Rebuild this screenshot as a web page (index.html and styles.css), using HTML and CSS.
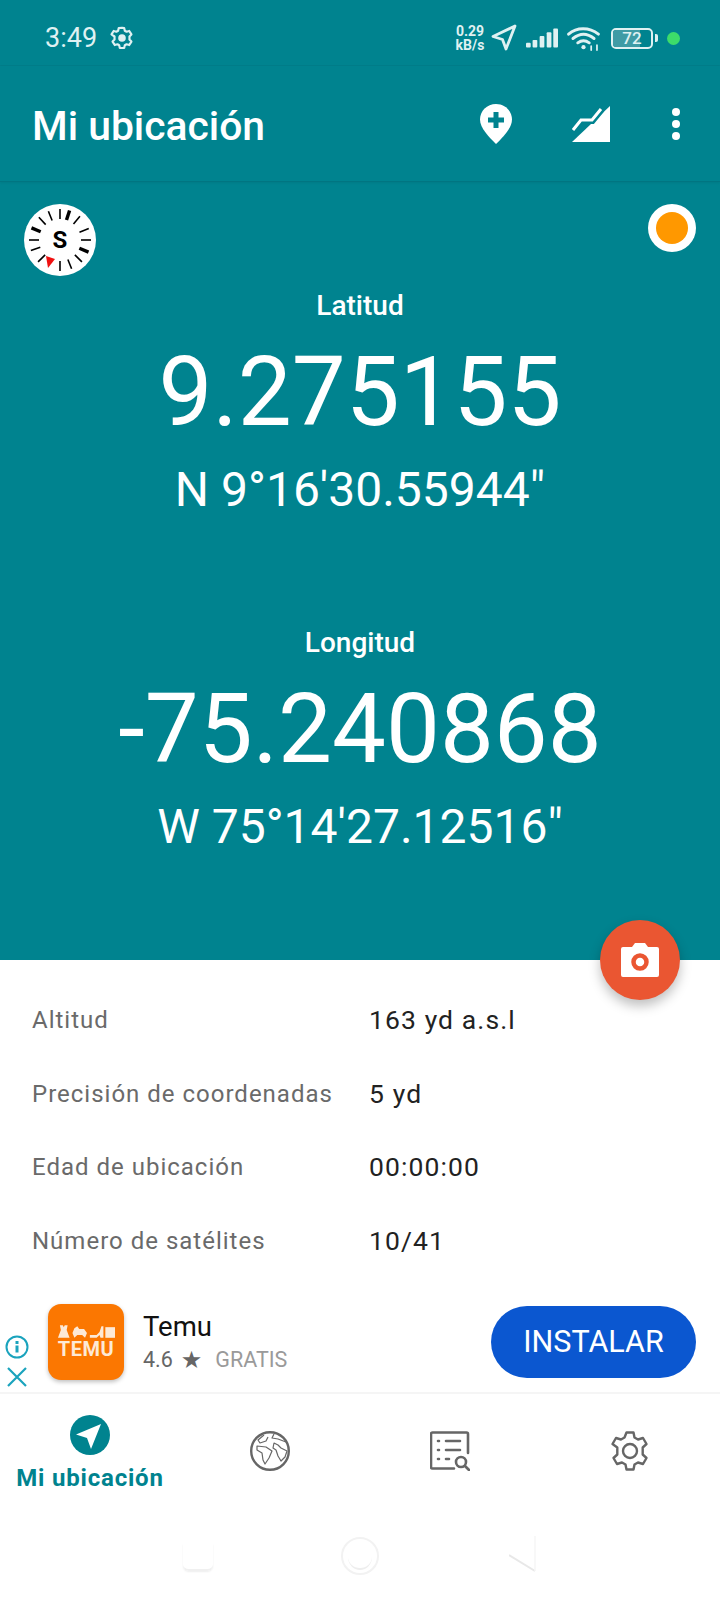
FILE: index.html
```html
<!DOCTYPE html>
<html lang="es">
<head>
    <meta charset="UTF-8">
    <meta name="viewport" content="width=device-width, initial-scale=1.0">
    <title>Mi ubicación</title>
    <link rel="stylesheet" href="styles.css">
</head>
<body>
    <div class="top">
        <div class="status">
            <div class="status-left">
                <span class="time">3:49</span>
                <svg class="status-gear" viewBox="0 0 24 24"><path d="M12 2.500l2 .3.6 2.500 1.600.9 2.500-.7 2 3.200-1.800 1.900v2.800l1.800 1.900-2 3.200-2.500-.7-1.600.9-.6 2.500h-4l-.6-2.500-1.600-.9-2.500.7-2-3.200 1.800-1.900V10.600L2.300 8.700l2-3.200 2.500.7 1.600-.9.6-2.500z" fill="none" stroke="#dff1f2" stroke-width="2" stroke-linejoin="round"/><circle cx="12" cy="12" r="3.500" fill="#dff1f2"/></svg>
            </div>
            <div class="status-right">
                <div class="speed"><span>0.29</span><span>kB/s</span></div>
                <svg class="st-nav" viewBox="0 0 28 28"><path d="M25 2L3 12.500l9.500 3L16 25z" fill="none" stroke="#dff1f2" stroke-width="2.800" stroke-linejoin="round"/></svg>
                <svg class="st-signal" viewBox="0 0 34 22" fill="#dff1f2"><rect x="0" y="16" width="5" height="5" rx="1"/><rect x="7" y="13" width="5" height="8" rx="1"/><rect x="14.500" y="9" width="5" height="12" rx="1"/><rect x="22" y="5" width="5" height="16" rx="1"/><rect x="29" y="1" width="5" height="20" rx="1"/></svg>
                <svg class="st-wifi" viewBox="0 0 34 26" fill="none" stroke="#dff1f2" stroke-width="3" stroke-linecap="round"><path d="M1.500 8.500C10 1 23 1 32.500 8.500"/><path d="M6 13c7-5.500 15-5.500 22 0"/><path d="M11 17.500c4-3 8-3 12 0"/><circle cx="17" cy="22" r="2.200" fill="#dff1f2" stroke="none"/><path d="M25 25v-4M31 25v-5" stroke-width="1.800"/></svg>
                <div class="battery">
                    <div class="battery-body"><div class="battery-fill"></div><span>72</span></div>
                    <div class="battery-tip"></div>
                </div>
                <div class="green-dot"></div>
            </div>
        </div>
        <header class="appbar">
            <h1>Mi ubicación</h1>
            <div class="appbar-icons">
                <svg class="ic-pin" viewBox="0 0 32 40"><path d="M16 0C7 0 0 7 0 15.500 0 24 9 33 16 40c7-7 16-16 16-24.500C32 7 25 0 16 0z" fill="#fff"/><path d="M13.500 8h5v5.500H24v5h-5.500V24h-5v-5.500H8v-5h5.500z" fill="#00838f"/></svg>
                <svg class="ic-terrain" viewBox="0 0 38 36"><path d="M0 36L38 0v36z" fill="#fff"/><path d="M1 24l8-10h11l9-11" fill="none" stroke="#00838f" stroke-width="8"/><path d="M1 24l8-10h11l9-11" fill="none" stroke="#fff" stroke-width="3"/></svg>
                <div class="dots"><i></i><i></i><i></i></div>
            </div>
        </header>
        <section class="coords">
            <svg class="compass" viewBox="0 0 72 72">
                <circle cx="36" cy="36" r="36" fill="#fff"/>
                <g stroke="#000" stroke-width="1.600">
                    <path d="M36 5v10"/>
                    <path d="M36 5v10" transform="rotate(40 36 36)"/>
                    <path d="M36 5v10" transform="rotate(68 36 36)"/>
                    <path d="M36 5v10" transform="rotate(90 36 36)"/>
                    <path d="M36 5v10" transform="rotate(135 36 36)"/>
                    <path d="M36 5v10" transform="rotate(158 36 36)"/>
                    <path d="M36 5v10" transform="rotate(180 36 36)"/>
                    <path d="M36 5v10" transform="rotate(225 36 36)"/>
                    <path d="M36 5v10" transform="rotate(250 36 36)"/>
                    <path d="M36 5v10" transform="rotate(270 36 36)"/>
                    <path d="M36 5v10" transform="rotate(317 36 36)"/>
                    <path d="M36 5v10" transform="rotate(338 36 36)"/>
                </g>
                <g stroke="#000" stroke-width="3.400">
                    <path d="M36 5v10" transform="rotate(18 36 36)"/>
                    <path d="M36 5v10" transform="rotate(113 36 36)"/>
                    <path d="M36 5v10" transform="rotate(293 36 36)"/>
                </g>
                <path d="M22 52l9 3-7 9z" fill="#f01010"/>
                <text x="36" y="44" class="compass-letter">S</text>
            </svg>
            <div class="record"><div class="record-dot"></div></div>
            <div class="coord coord-lat">
                <div class="coord-label">Latitud</div>
                <div class="coord-value">9.275155</div>
                <div class="coord-dms">N 9°16'30.55944"</div>
            </div>
            <div class="coord coord-lon">
                <div class="coord-label">Longitud</div>
                <div class="coord-value">-75.240868</div>
                <div class="coord-dms">W 75°14'27.12516"</div>
            </div>
            <div class="fab">
                <svg viewBox="0 0 40 36"><path d="M3 5h9l3-4h10l3 4h9a2 2 0 0 1 2 2v26a2 2 0 0 1-2 2H3a2 2 0 0 1-2-2V7a2 2 0 0 1 2-2z" fill="#fff"/><circle cx="20" cy="20" r="6.500" fill="none" stroke="#ea5632" stroke-width="4.500"/></svg>
            </div>
        </section>
    </div>

    <section class="details">
        <div class="row"><span class="row-label">Altitud</span><span class="row-value">163 yd a.s.l</span></div>
        <div class="row"><span class="row-label">Precisión de coordenadas</span><span class="row-value">5 yd</span></div>
        <div class="row"><span class="row-label">Edad de ubicación</span><span class="row-value">00:00:00</span></div>
        <div class="row"><span class="row-label">Número de satélites</span><span class="row-value">10/41</span></div>
    </section>

    <section class="ad">
        <div class="ad-side">
            <svg viewBox="0 0 24 24" fill="none" stroke="#1aa3bd" stroke-width="2"><circle cx="12" cy="12" r="10.500"/><path d="M12 10.500v7" stroke-width="3"/><path d="M12 6v3" stroke-width="3"/></svg>
            <svg viewBox="0 0 24 24" fill="none" stroke="#1aa3bd" stroke-width="2.200"><path d="M3 3l18 18M21 3L3 21"/></svg>
        </div>
        <div class="temu-logo">
            <svg viewBox="0 0 60 14" fill="#fde9d6"><path d="M3 0h3l1 2 1-2h3l-1 5 3 8H1l3-8z"/><path d="M18 3l3-2 2 3h5l3 4-2 5-3-3h-5l-3 3-2-5z"/><path d="M34 13v-3l7 0 3-3 2-6h2v12h-3l-1-3-3 3z"/><path d="M50 2h10v11H50z"/></svg>
            <span>TEMU</span>
        </div>
        <div class="ad-info">
            <div class="ad-name">Temu</div>
            <div class="ad-meta"><span>4.6</span><span class="star">★</span><span class="free">GRATIS</span></div>
        </div>
        <div class="install">INSTALAR</div>
    </section>

    <nav class="tabs">
        <div class="tab tab-active">
            <svg viewBox="0 0 40 40"><circle cx="20" cy="20" r="20" fill="#00838f"/><path d="M31 9L6 19.500l11 3.500 4 11z" fill="#fff"/></svg>
            <span>Mi ubicación</span>
        </div>
        <div class="tab">
            <svg viewBox="0 0 40 40" fill="none" stroke="#666" stroke-width="1.200" stroke-linejoin="round"><circle cx="20" cy="20" r="18.800" stroke-width="2.400"/><path d="M14 4L8 9l2 3 6-2 2-4"/><path d="M7 15l9 1 6 4-3 7-4 6-2-4-1-7-5-3z"/><path d="M24 3l-2 4 6 1 8 3"/><path d="M24 12l4 2 3 3 6 3-2 6-4 4-3-5-2-6-3-2z"/></svg>
        </div>
        <div class="tab">
            <svg viewBox="0 0 40 40" fill="none" stroke="#666" stroke-width="2.600" stroke-linecap="round" stroke-linejoin="round"><path d="M38 22V3a1.500 1.500 0 0 0-1.500-1.500h-34A1.500 1.500 0 0 0 1 3v33a1.500 1.500 0 0 0 1.500 1.500H24"/><path d="M8 10h1M16 10h14M8 19h1M16 19h14M8 28h1M16 28h3"/><circle cx="31" cy="31" r="5"/><path d="M35 35l4 4"/></svg>
        </div>
        <div class="tab">
            <svg viewBox="0 0 40 40" fill="none" stroke="#666" stroke-width="2.400" stroke-linejoin="round"><path d="M16.500 1.500h7l1 5 3.500 2 5-1.500 3.500 6-3.800 3.500v7l3.800 3.500-3.500 6-5-1.500-3.500 2-1 5h-7l-1-5-3.500-2-5 1.500-3.500-6 3.800-3.500v-7L2.500 13l3.500-6 5 1.500 3.500-2z"/><circle cx="20" cy="20" r="7"/></svg>
        </div>
    </nav>

    <div class="sysnav">
        <div class="sys-square"></div>
        <div class="sys-circle"><div></div></div>
        <svg class="sys-back" viewBox="0 0 27 36" fill="none"><path d="M0 19l26 16" stroke="#e8e8e8" stroke-width="2"/><path d="M26 35V0" stroke="#f6f6f6" stroke-width="1.500"/></svg>
    </div>
</body>
</html>
```

FILE: styles.css
```css
body {
	font-family: Roboto, "Liberation Sans", sans-serif;
	margin: 0;
	padding: 0;
	background: #fff;
	width: 720px;
	height: 1600px;
	overflow: hidden;
}

.top {
	background: #00838f;
	color: #fff;
}

/* status bar */
.status {
	height: 66px;
	display: flex;
	justify-content: space-between;
	align-items: center;
	padding: 11px 40px 0 45px;
	color: #dff1f2;
	box-sizing: border-box;
	border-bottom: 1px solid #017d89;
}

.status-left {
	display: flex;
	align-items: center;
	gap: 12px;
}

.time {
	font-size: 27px;
}

.status-gear {
	width: 26px;
	height: 26px;
}

.status-right {
	display: flex;
	align-items: center;
}

.speed {
	display: flex;
	flex-direction: column;
	font-size: 14px;
	font-weight: 700;
	line-height: 14px;
	width: 34px;
	margin-right: 3px;
	align-items: center;
}

.st-nav {
	width: 28px;
	height: 28px;
	margin-right: 8px;
}

.st-signal {
	width: 32px;
	height: 22px;
	margin-right: 9px;
}

.st-wifi {
	width: 33px;
	height: 25px;
	margin-right: 11px;
}

.battery {
	display: flex;
	align-items: center;
	margin-right: 9px;
}

.battery-body {
	width: 38px;
	height: 17px;
	border: 2px solid #dff1f2;
	border-radius: 5px;
	position: relative;
	text-align: center;
	font-size: 17px;
	line-height: 17px;
	font-weight: 500;
	overflow: hidden;
}

.battery-body span {
	position: relative;
}

.battery-fill {
	position: absolute;
	left: 0;
	top: 0;
	bottom: 0;
	width: 72%;
	background: #3f9ba5;
}

.battery-tip {
	width: 3px;
	height: 8px;
	background: #dff1f2;
	margin-left: 2px;
	border-radius: 0 2px 2px 0;
}

.green-dot {
	width: 13px;
	height: 13px;
	border-radius: 50%;
	background: #3ddc6a;
}

/* app bar */
.appbar {
	height: 115px;
	display: flex;
	align-items: center;
	justify-content: space-between;
	padding: 0 40px 0 32px;
	border-bottom: 1px solid #017581;
	box-shadow: 0 1px 2px rgba(0, 0, 0, 0.06);
}

.appbar h1 {
	font-size: 40.800px;
	font-weight: 500;
	margin: 5px 0 0;
}

.appbar-icons {
	display: flex;
	align-items: center;
}

.ic-pin {
	width: 32px;
	height: 40px;
	margin-right: 60px;
}

.ic-terrain {
	width: 38px;
	height: 36px;
	margin-right: 62px;
}

.dots {
	display: flex;
	flex-direction: column;
	gap: 4px;
}

.dots i {
	display: block;
	width: 8px;
	height: 8px;
	border-radius: 50%;
	background: #fff;
}

/* coordinates */
.coords {
	height: 778px;
	position: relative;
	text-align: center;
	box-sizing: border-box;
	padding-top: 108px;
}

.compass {
	position: absolute;
	left: 24px;
	top: 22px;
	width: 72px;
	height: 72px;
}

.compass-letter {
	font-size: 24px;
	font-weight: 700;
	text-anchor: middle;
	fill: #000;
}

.record {
	position: absolute;
	right: 24px;
	top: 22px;
	width: 48px;
	height: 48px;
	border-radius: 50%;
	background: #fff;
	display: flex;
	align-items: center;
	justify-content: center;
}

.record-dot {
	width: 32px;
	height: 32px;
	border-radius: 50%;
	background: #ff9800;
}

.coord {
	height: 337px;
}

.coord-label {
	font-size: 28px;
	font-weight: 500;
	line-height: 32px;
}

.coord-value {
	font-size: 96px;
	font-weight: 400;
	line-height: 112px;
	margin-top: 14px;
}

.coord-dms {
	font-size: 48px;
	font-weight: 400;
	line-height: 53px;
	margin-top: 15px;
}

.fab {
	position: absolute;
	right: 40px;
	bottom: -40px;
	width: 80px;
	height: 80px;
	border-radius: 50%;
	background: #ea5632;
	box-shadow: 0 6px 12px rgba(0, 0, 0, 0.25);
	display: flex;
	align-items: center;
	justify-content: center;
}

.fab svg {
	width: 40px;
	height: 36px;
}

/* details */
.details {
	height: 320px;
	box-sizing: border-box;
	padding-top: 44px;
}

.row {
	display: flex;
	height: 73.700px;
	align-items: flex-start;
	line-height: 32px;
	padding-left: 32px;
}

.row-label {
	width: 337px;
	font-size: 24px;
	color: #6a6a6a;
	letter-spacing: 1px;
}

.row-value {
	font-size: 26.500px;
	color: #222;
	letter-spacing: 1.1px;
}

/* ad */
.ad {
	height: 114px;
	display: flex;
	align-items: flex-start;
	border-bottom: 2px solid #f5f5f5;
	box-sizing: border-box;
}

.ad-side {
	display: flex;
	flex-direction: column;
	align-items: center;
	gap: 6px;
	width: 34px;
	margin-top: 55px;
}

.ad-side svg {
	width: 24px;
	height: 24px;
}

.temu-logo {
	width: 76px;
	height: 76px;
	margin: 24px 0 0 14px;
	border-radius: 13px;
	background: #fb7701;
	box-shadow: 0 2px 4px rgba(0, 0, 0, 0.25);
	display: flex;
	flex-direction: column;
	align-items: center;
	justify-content: center;
	color: #fde9d6;
}

.temu-logo svg {
	width: 58px;
	height: 14px;
}

.temu-logo span {
	font-size: 20px;
	font-weight: 700;
	line-height: 20px;
	letter-spacing: 0.5px;
}

.ad-info {
	margin: 32px 0 0 19px;
	flex: 1;
}

.ad-name {
	font-size: 27.500px;
	line-height: 30px;
	color: #111;
	font-weight: 400;
}

.ad-meta {
	font-size: 21.500px;
	line-height: 32px;
	color: #666;
	display: flex;
	align-items: center;
	padding-top: 2px;
}

.star {
	margin-left: 8px;
	font-size: 24px;
	font-family: "DejaVu Sans", sans-serif;
}

.free {
	margin-left: 13px;
	color: #9a9a9a;
}

.install {
	width: 205px;
	height: 72px;
	margin: 26px 24px 0 0;
	border-radius: 36px;
	background: #0b57d0;
	color: #fff;
	font-size: 30.500px;
	line-height: 71px;
	text-align: center;
}

/* bottom nav */
.tabs {
	display: grid;
	grid-template-columns: repeat(4, 180px);
	height: 106px;
}

.tab {
	display: flex;
	flex-direction: column;
	align-items: center;
	padding-top: 37px;
	box-sizing: border-box;
}

.tab svg {
	width: 40px;
	height: 40px;
}

.tab-active {
	padding-top: 21px;
}

.tab-active span {
	font-size: 24px;
	font-weight: 700;
	color: #00838f;
	line-height: 30px;
	margin-top: 8px;
	letter-spacing: 0.8px;
	white-space: nowrap;
}

/* system navigation */
.sysnav {
	display: flex;
	align-items: flex-start;
	padding: 36px 0 0 183px;
}

.sys-square {
	width: 30px;
	height: 25px;
	margin: 8px 0 0 0;
	border-radius: 0 0 6px 6px;
	border-bottom: 2px solid #f0f0f0;
	box-shadow: 0 1px 2px #eee;
}

.sys-circle {
	width: 34px;
	height: 34px;
	margin: 1px 0 0 128px;
	border-radius: 50%;
	border: 2px solid #f2f2f2;
	box-sizing: content-box;
}

.sys-circle div {
	width: 24px;
	height: 24px;
	margin: 5px;
	border-radius: 50%;
	border-bottom: 2px solid #eee;
}

.sys-back {
	width: 27px;
	height: 36px;
	margin-left: 130px;
}
```
